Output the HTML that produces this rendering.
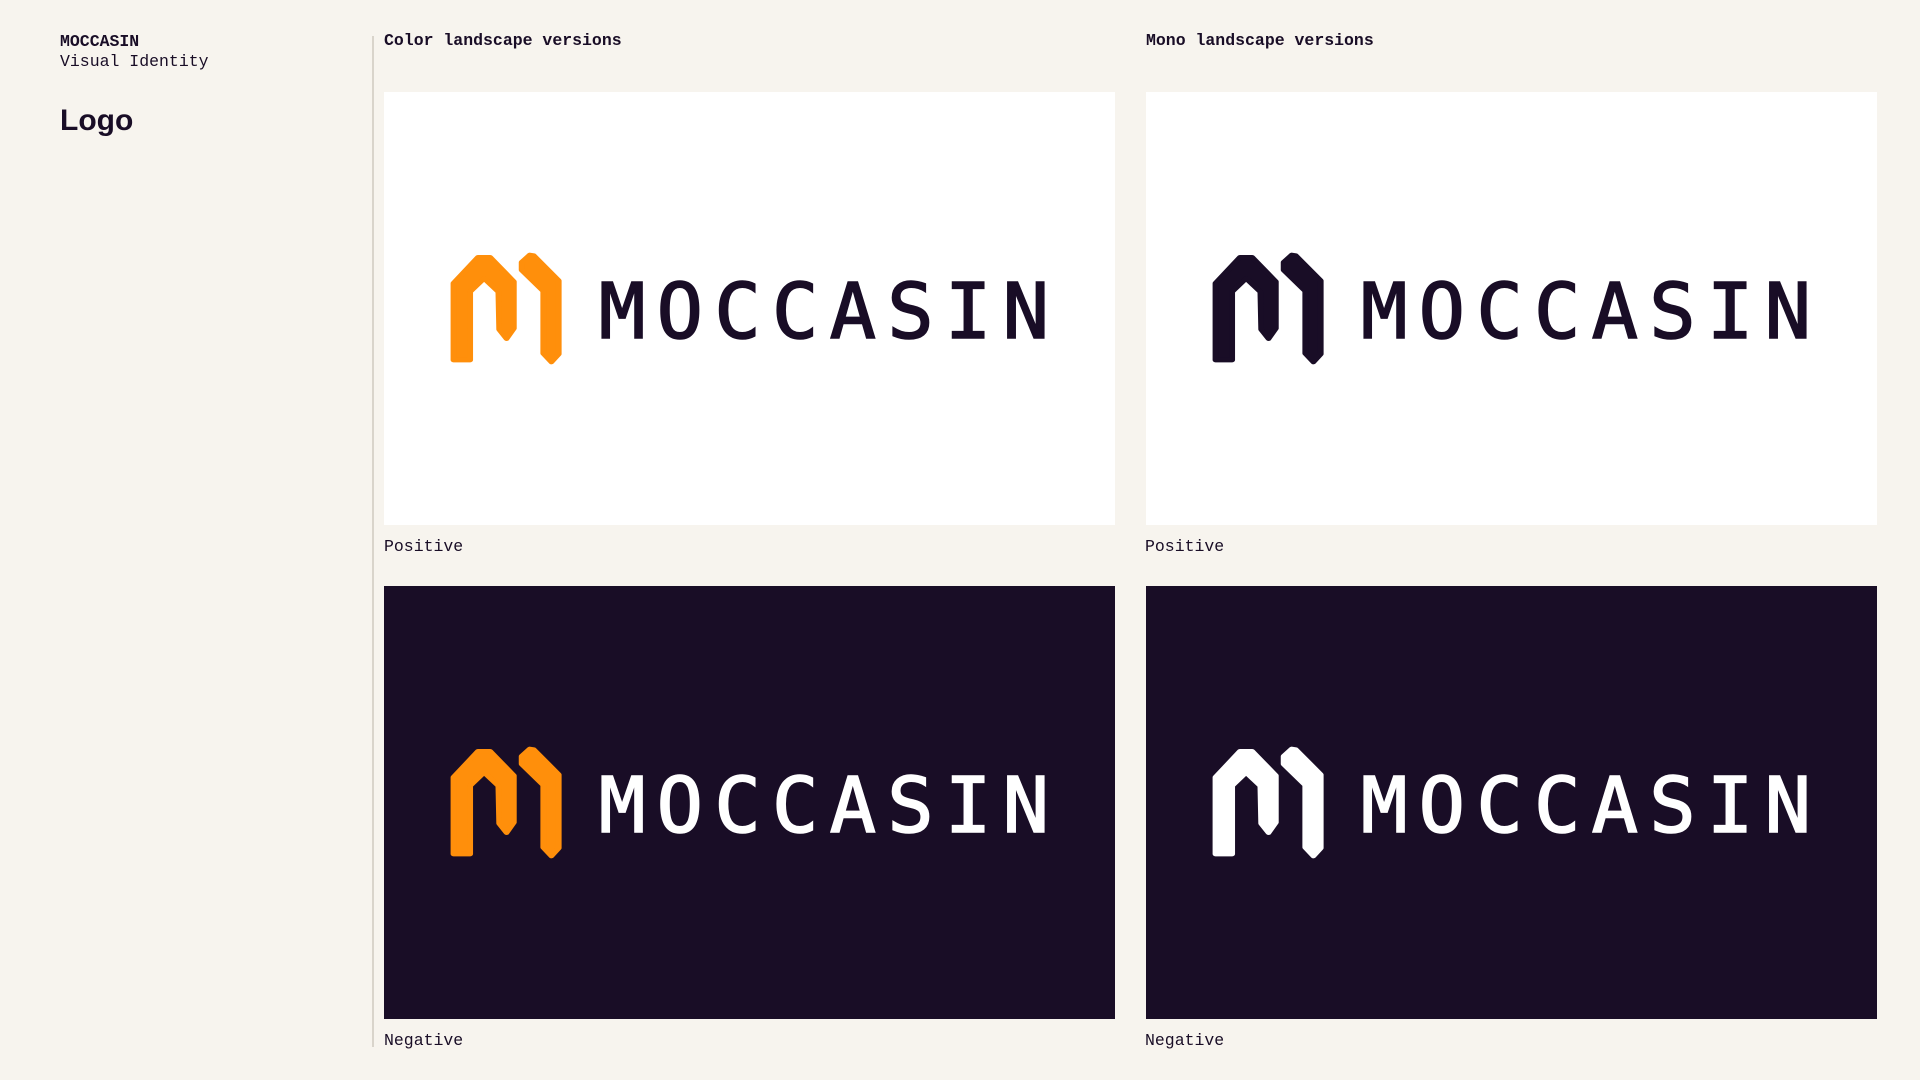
<!DOCTYPE html>
<html><head><meta charset="utf-8"><style>
*{margin:0;padding:0;box-sizing:border-box}
body{width:1920px;height:1080px;background:#f7f4ee;position:relative;overflow:hidden;font-family:"Liberation Mono",monospace;color:#190d26}
.abs{position:absolute}
.h{font-size:16.5px;font-weight:bold;top:31px}
.lbl{font-size:16.5px}
.panel{position:absolute;width:731px;height:433px}
.panel svg{position:absolute;left:47px;top:138px}
.wm{position:absolute;font-family:"DejaVu Sans Mono",monospace;font-size:77px;line-height:1;letter-spacing:11.3px;white-space:nowrap;-webkit-text-stroke:1.6px currentColor}
</style></head><body>
<div class="abs" style="left:60px;top:32px;font-size:16.5px;font-weight:bold">MOCCASIN</div>
<div class="abs" style="left:60px;top:52px;font-size:16.5px">Visual Identity</div>
<div class="abs" style="left:60px;top:106px;font-family:'Liberation Sans',sans-serif;font-weight:bold;font-size:30px;line-height:1">Logo</div>
<div class="abs" style="left:372px;top:36px;width:2px;height:1011px;background:#d9d4cb"></div>
<div class="abs h" style="left:384px">Color landscape versions</div>
<div class="abs h" style="left:1146px">Mono landscape versions</div>

<div class="panel" style="left:384px;top:92px;background:#fff">
<svg width="640" height="160" viewBox="0 0 1568 480" preserveAspectRatio="none"><g fill="#ff8f0b" stroke="#ff8f0b" stroke-width="14" stroke-linejoin="round">
<polygon points="55,390 55,160 115,82 145,82 203,155 203,295 185,326 167,298 165,185 130,145 96,185 96,390"/>
<polygon points="222,97 242,75 252,77 313,152 313,372 295,396 275,370 275,183 222,120"/></g></svg>
<div class="wm" style="left:215px;top:182px;color:#190d26">MOCCASIN</div>
</div>
<div class="panel" style="left:1146px;top:92px;background:#fff">
<svg width="640" height="160" viewBox="0 0 1568 480" preserveAspectRatio="none"><g fill="#190d26" stroke="#190d26" stroke-width="14" stroke-linejoin="round">
<polygon points="55,390 55,160 115,82 145,82 203,155 203,295 185,326 167,298 165,185 130,145 96,185 96,390"/>
<polygon points="222,97 242,75 252,77 313,152 313,372 295,396 275,370 275,183 222,120"/></g></svg>
<div class="wm" style="left:215px;top:182px;color:#190d26">MOCCASIN</div>
</div>
<div class="panel" style="left:384px;top:586px;background:#190d26">
<svg width="640" height="160" viewBox="0 0 1568 480" preserveAspectRatio="none"><g fill="#ff8f0b" stroke="#ff8f0b" stroke-width="14" stroke-linejoin="round">
<polygon points="55,390 55,160 115,82 145,82 203,155 203,295 185,326 167,298 165,185 130,145 96,185 96,390"/>
<polygon points="222,97 242,75 252,77 313,152 313,372 295,396 275,370 275,183 222,120"/></g></svg>
<div class="wm" style="left:215px;top:182px;color:#fff">MOCCASIN</div>
</div>
<div class="panel" style="left:1146px;top:586px;background:#190d26">
<svg width="640" height="160" viewBox="0 0 1568 480" preserveAspectRatio="none"><g fill="#fff" stroke="#fff" stroke-width="14" stroke-linejoin="round">
<polygon points="55,390 55,160 115,82 145,82 203,155 203,295 185,326 167,298 165,185 130,145 96,185 96,390"/>
<polygon points="222,97 242,75 252,77 313,152 313,372 295,396 275,370 275,183 222,120"/></g></svg>
<div class="wm" style="left:215px;top:182px;color:#fff">MOCCASIN</div>
</div>
<div class="abs lbl" style="left:384px;top:537px">Positive</div>
<div class="abs lbl" style="left:1145px;top:537px">Positive</div>
<div class="abs lbl" style="left:384px;top:1031px">Negative</div>
<div class="abs lbl" style="left:1145px;top:1031px">Negative</div>
</body></html>
